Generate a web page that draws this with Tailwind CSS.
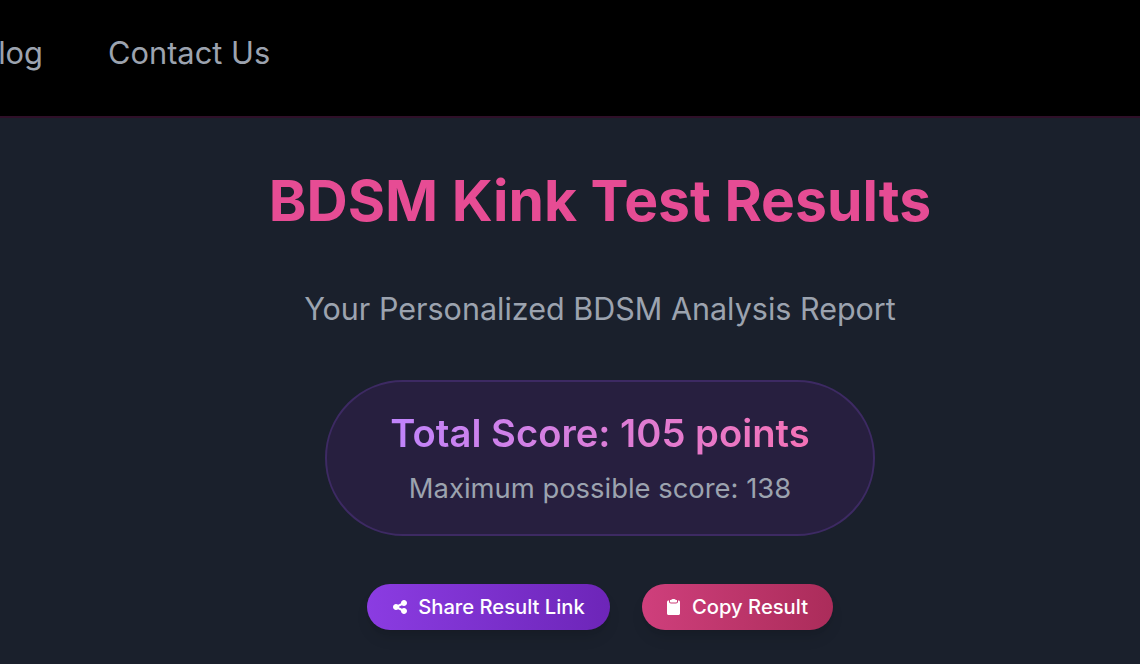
<!DOCTYPE html>
<html>
<head>
<meta charset="utf-8">
<script src="https://cdn.jsdelivr.net/npm/@tailwindcss/browser@4"></script>
</head>
<body class="bg-[#1a202c] font-['Inter',sans-serif] [font-optical-sizing:none] [font-variation-settings:'opsz'_14] overflow-hidden">
<div class="h-[664px] w-[1140px] overflow-hidden">
  <header class="h-[118px] bg-black border-b-2 border-[#2f1029] flex items-center pb-[10px] overflow-hidden">
    <nav class="flex gap-[65px] -ml-[22px] text-[30.8px] leading-[36px] text-[#9ca3af] whitespace-nowrap">
      <a>Blog</a>
      <a>Contact Us</a>
    </nav>
  </header>
  <main class="flex flex-col items-center pt-[48px] pl-[60px]">
    <h1 class="text-[57px] leading-[70px] font-bold text-[#e64c94]">BDSM Kink Test Results</h1>
    <p class="mt-[55px] text-[30.500px] leading-[36px] text-[#9ca3af]">Your Personalized BDSM Analysis Report</p>
    <div class="mt-[53px] w-[550px] h-[156px] rounded-[78px] border-2 border-[#3d2a63] bg-[#271f3f] flex flex-col items-center justify-center">
      <div class="text-[38.200px] leading-[46px] font-semibold -mt-[2px] bg-gradient-to-r from-[#c084fc] to-[#f472b6] bg-clip-text text-transparent">Total Score: 105 points</div>
      <div class="mt-[16px] text-[27.400px] leading-[32px] text-[#9ca3af]">Maximum possible score: 138</div>
    </div>
    <div class="mt-[48px] flex gap-[32px]">
      <button class="h-[46px] w-[243px] rounded-[23px] bg-gradient-to-r from-[#8b3ce2] to-[#6d25b8] text-white text-[20.200px] font-medium flex items-center justify-center gap-[10px] shadow-lg shadow-black/10">
        <svg class="w-[16px] h-[16px]" viewBox="0 0 448 512" fill="currentColor"><path d="M352 224c53 0 96-43 96-96s-43-96-96-96s-96 43-96 96c0 4 .2 8 .7 11.900l-94.100 47C145.400 170.200 121.900 160 96 160c-53 0-96 43-96 96s43 96 96 96c25.900 0 49.400-10.200 66.600-26.900l94.100 47c-.5 3.900-.7 7.800-.7 11.900c0 53 43 96 96 96s96-43 96-96s-43-96-96-96c-25.900 0-49.400 10.200-66.600 26.900l-94.100-47c.5-3.900 .7-7.800 .7-11.900s-.2-8-.7-11.900l94.100-47C302.600 213.800 326.100 224 352 224z"/></svg>
        Share Result Link
      </button>
      <button class="h-[46px] w-[191px] rounded-[23px] bg-gradient-to-r from-[#cf3f7c] to-[#ab2c5a] text-white text-[20.200px] font-medium flex items-center justify-center gap-[12px] shadow-lg shadow-black/10">
        <svg class="w-[13px] h-[16px]" viewBox="0 0 13 16" fill="currentColor"><path d="M3 1h1.200C4.500 .4 5.400 0 6.500 0s2 .4 2.300 1H10v1.500c0 .6-.4 1-1 1H4c-.6 0-1-.4-1-1V1zM1.500 1.500H2v1c0 1.200 .8 2 2 2h5c1.200 0 2-.8 2-2v-1h.5c.8 0 1.500 .7 1.500 1.500v11.500c0 .8-.7 1.500-1.500 1.500h-10C.7 16 0 15.300 0 14.500V3c0-.8 .7-1.500 1.500-1.500z"/></svg>
        Copy Result
      </button>
    </div>
  </main>
</div>
</body>
</html>
